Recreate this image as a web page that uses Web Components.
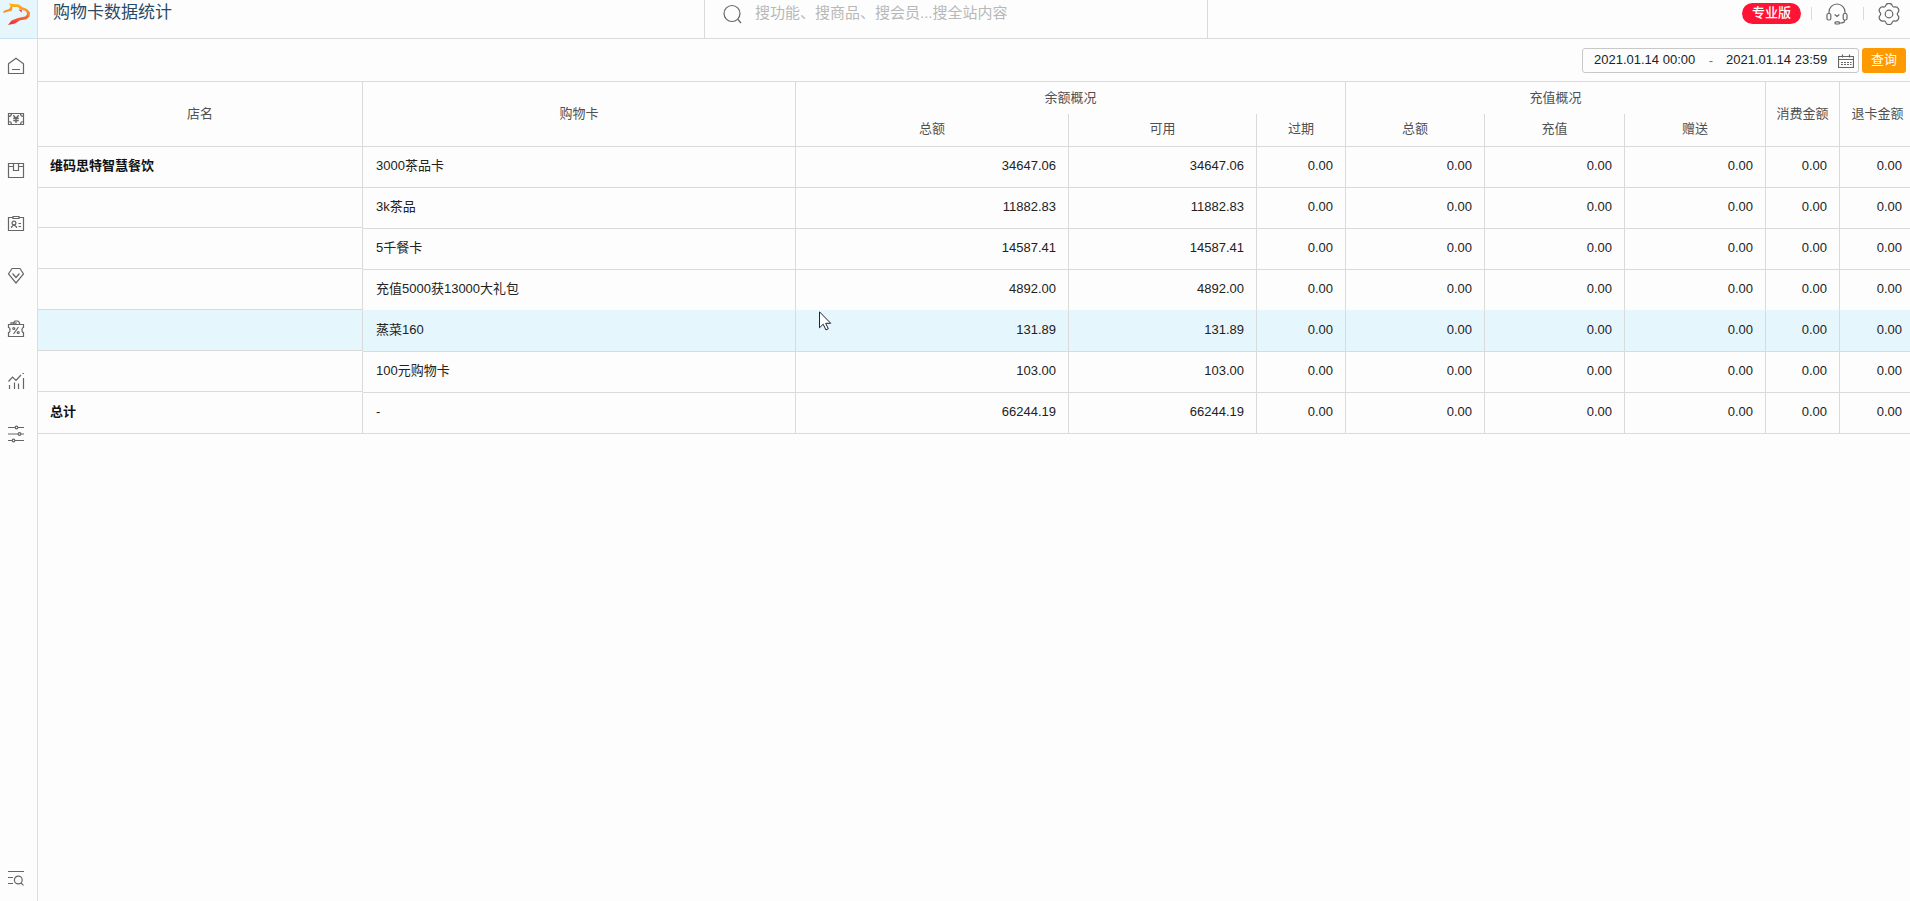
<!DOCTYPE html>
<html lang="zh-CN">
<head>
<meta charset="utf-8">
<title>购物卡数据统计</title>
<style>
html, body { height: 100%; margin: 0; }
body {
  --line: #dadada; --side-line: #c9e3f0; --tint: #e5f6fd; --ink: #222; --head: #505050;
  background: #fdfdfd; color: var(--ink);
  font: 13px/18px "Liberation Sans", "Noto Sans CJK SC", sans-serif;
}
</style>
</head>
<body>
<app-shell>
  <side-nav slot="nav"></side-nav>
  <top-bar slot="top" heading="购物卡数据统计"></top-bar>
  <filter-bar slot="filter"></filter-bar>
  <stats-table></stats-table>
</app-shell>
<script>
function define(name, html, setup) {
  const t = document.createElement('template');
  t.innerHTML = '<style>:host,*{box-sizing:border-box}</style>' + html;
  customElements.define(name, class extends HTMLElement {
    constructor() {
      super();
      this.attachShadow({ mode: 'open' }).append(t.content.cloneNode(true));
    }
    connectedCallback() { if (setup) setup(this, this.shadowRoot); }
  });
}

// Outline of a six-lobed gear with rounded lobes, centred on (11, 11).
function gearPath() {
  const pts = [];
  for (let k = 0; k < 6; k++) {
    for (const [deg, r] of [[-13, 11], [13, 11], [30, 7.6]]) {
      const a = (k * 60 - 90 + deg) * Math.PI / 180;
      pts.push([11 + r * Math.cos(a), 11 + r * Math.sin(a)]);
    }
  }
  const mid = (p, q) => `${((p[0] + q[0]) / 2).toFixed(2)} ${((p[1] + q[1]) / 2).toFixed(2)}`;
  return `M${mid(pts[pts.length - 1], pts[0])}` + pts.map((p, i) =>
    `Q${p[0].toFixed(2)} ${p[1].toFixed(2)} ${mid(p, pts[(i + 1) % pts.length])}`).join('') + 'Z';
}

const icons = {
  logo: [28, '<defs><linearGradient id="g" gradientUnits="userSpaceOnUse" x1="0" y1="2" x2="0" y2="22"><stop offset="0" stop-color="#fdb515"/><stop offset=".5" stop-color="#f9802b"/><stop offset="1" stop-color="#ec2f45"/></linearGradient></defs><path fill="url(#g)" stroke="none" d="M6 1.500 16 2.500 19 5 24 7 27 10.500 26.500 14.500 23.500 17.200 17 18.200 12 21.500 5 23 8.500 18.500 15 16 22 14.500 24 12.500 23.500 10 21.500 8.500 17 7.500 15 5 9.500 5 9 8.500 0 11 1 8.800 6 7 7.500 4.500Z"/><path fill="#ee3366" stroke="none" d="M15.500 7.500 19 8.200 18.500 10.500Z"/>'],
  home: [18, '<path d="M1.500 6.700 9 1.200l7.500 5.500v9.800h-15zM5 12.500h8"/>'],
  cash: [18, '<path d="M1.500 3.500h15v11h-15zM1.500 6.500q3 0 3-3M16.500 6.500q-3 0-3-3M1.500 11.500q3 0 3 3M16.500 11.500q-3 0-3 3"/><path stroke-width="1.400" d="m6.300 5.300 2.700 3 2.700-3M9 8v5M6.300 8.300h5.400M6.300 10.500h5.400"/>'],
  box: [18, '<path d="M1.500 1.500h15v14h-15zM1.500 4.500h5M11.500 4.500h5M6.500 1.500v7h5v-7"/>'],
  badge: [18, '<path d="M6 2.500H1.500v13h15v-13H12M6 1.500h6v2H6zM4.500 13v-1l1.500-1.500h2L9.500 12v1M11.500 8.500H14M11.500 11.500H14"/><circle cx="7" cy="8" r="1.900"/>'],
  gem: [18, '<path d="M5 1.500h8L16.500 7 9 16 1.500 7z"/><path d="m5.500 6.500 3.500 4 3.500-4"/>'],
  coupon: [18, '<path d="M1.500 4.500h15v3q-1.500 0-1.500 2.500t1.500 2.500v4h-15v-4Q3 12.500 3 10T1.500 7.500zM4 4.500V2.800h2.500v1.700M6.500 2.800 8 1h3l1.500 1.700v1.800M8 4.500V3h2M6.500 14l5-7"/><circle cx="6.800" cy="8.500" r="1"/><circle cx="11.200" cy="12.500" r="1"/>'],
  chart: [18, '<path d="m1.500 9.500 4-4.500 3.500 3.500 5-5.500M15.500 1.500h1.500M2.500 17v-4M7.500 17V10.500M11.500 17v-5.500M16.500 17V6"/>'],
  sliders: [18, '<path d="M1 2.500h16M1 9h16M1 15.500h16"/><circle cx="9.500" cy="2.500" r="1.300" fill="#fdfdfd"/><circle cx="12.500" cy="9" r="1.300" fill="#fdfdfd"/><circle cx="6.500" cy="15.500" r="1.300" fill="#fdfdfd"/>'],
  menusearch: [18, '<path d="M1 2.500h16M1 8.500h5M1 14.500h5M14 13.800l2.500 2.500"/><circle cx="11.300" cy="11" r="3.900"/>'],
  search: [20, '<circle cx="9" cy="9.500" r="8"/><path d="m15 15.500 3 3.500"/>'],
  headset: [22, '<path d="M3 10.500V9a8 8 0 0 1 16 0v1.500M18.500 17v1q0 2-4.500 2"/><rect x="1" y="10.500" width="3.800" height="6.500" rx="1.500"/><rect x="17.200" y="10.500" width="3.800" height="6.500" rx="1.500"/><path d="m8.700 11.500 2.300 2 2.300-2"/><rect x="9" y="18.800" width="4.500" height="2.200" rx="1"/>'],
  gear: [22, `<path d="${gearPath()}"/><circle cx="11" cy="11" r="3.800"/>`],
  calendar: [16, '<path d="M.5 3.500h15v11H.5zM.5 6.500h15M4.500 1.500v3M11.500 1.500v3"/><path stroke-dasharray="2 1" d="M3 9.500h10.500M3 11.500h10.500"/>']
};
define('ui-icon', '<style>:host{display:block;flex:none;color:#666}svg{display:block;fill:none;stroke:currentColor;stroke-width:1.2}</style><svg aria-hidden="true"></svg>', (el, root) => {
  const [size, body] = icons[el.getAttribute('name')];
  const svg = root.querySelector('svg');
  svg.setAttribute('width', size);
  svg.setAttribute('height', size);
  svg.setAttribute('viewBox', `0 0 ${size} ${size}`);
  svg.innerHTML = body;
});

define('app-shell', `<style>
:host{display:grid;grid-template-columns:38px minmax(0,1fr);min-height:100%}
main{min-width:0}
</style><slot name="nav"></slot><main><slot name="top"></slot><slot name="filter"></slot><slot></slot></main>`);

define('side-nav', `<style>
:host{display:block;border-right:1px solid var(--side-line)}
nav{display:flex;flex-direction:column;height:100%}
a{display:block;padding-left:7px}
.logo{height:39px;padding:2px 0 0 3px;background:var(--tint);border-bottom:1px solid var(--side-line)}
.items{display:flex;flex-direction:column;justify-content:space-between;height:386px;margin-top:18px}
.last{margin-top:auto;padding-bottom:14px}
</style><nav aria-label="主导航">
<a class="logo" href="#" aria-label="首页"><ui-icon name="logo"></ui-icon></a>
<div class="items"></div>
<a class="last" href="#" aria-label="菜单搜索"><ui-icon name="menusearch"></ui-icon></a></nav>`, (el, root) => {
  root.querySelector('.items').innerHTML = ['home', 'cash', 'box', 'badge', 'gem', 'coupon', 'chart', 'sliders']
    .map(n => `<a href="#" aria-label="${n}"><ui-icon name="${n}"></ui-icon></a>`).join('');
});

define('top-bar', `<style>
:host{display:grid;grid-template-columns:minmax(0,666fr) minmax(0,504fr) minmax(0,702fr);height:39px;border-bottom:1px solid var(--line)}
h1{margin:0;padding:1px 0 0 15px;font-size:17px;line-height:24px;font-weight:400;color:#2b4a63}
label{display:flex;align-items:flex-start;gap:12px;padding:4px 0 0 18px;border:solid var(--line);border-width:0 1px}
input{flex:1;min-width:0;height:20px;margin-top:-1px;padding:0;border:0;outline:0;background:none;font:15px/20px "Liberation Sans","Noto Sans CJK SC",sans-serif;color:#333}
input::placeholder{color:#b8b8b8;opacity:1}
.tools{display:flex;justify-content:flex-end;align-items:flex-start;padding:3px 10px 0 0}
.plan{height:21px;width:59px;text-align:center;line-height:20px;border-radius:11px;background:#ff1435;color:#fff;font-weight:500}
i{width:1px;height:13px;margin-top:4px;background:var(--line)}
button{padding:0;border:0;background:none}
.plan + i{margin-left:10px}
.help{margin:0 15px 0 14px}.set{margin-left:14px}
</style><h1></h1>
<label aria-label="搜索"><ui-icon name="search"></ui-icon><input type="search" placeholder="搜功能、搜商品、搜会员...搜全站内容"></label>
<div class="tools"><span class="plan">专业版</span><i></i><button class="help" aria-label="客服"><ui-icon name="headset"></ui-icon></button><i></i><button class="set" aria-label="设置"><ui-icon name="gear"></ui-icon></button></div>`,
(el, root) => { root.querySelector('h1').textContent = el.getAttribute('heading'); });

define('filter-bar', `<style>
:host{display:flex;justify-content:flex-end;align-items:flex-start;gap:3px;height:42px;padding:9px 4px 0 0}
.range{display:flex;align-items:center;width:277px;height:25px;padding:0 4px 0 11px;border:1px solid #c8c8c8;border-radius:3px}
input{width:102px;height:22px;padding:0 0 2px;border:0;outline:0;background:none;font:inherit;color:var(--ink)}
span{width:30px;text-align:center;color:#777}
ui-icon{margin-left:auto}
button{width:44px;height:25px;padding:0 0 1px;border:0;border-radius:3px;background:#ff9900;color:#fff;font:inherit}
</style><div class="range"><input aria-label="开始时间" value="2021.01.14 00:00"><span>-</span><input aria-label="结束时间" value="2021.01.14 23:59"><ui-icon name="calendar"></ui-icon></div><button>查询</button>`);

define('stats-table', `<style>
:host{display:block}
table{width:100%;table-layout:fixed;border-collapse:separate;border-spacing:0;border-top:1px solid var(--line)}
th,td{padding:0;border:solid var(--line);border-width:0 1px 1px 0;background-clip:padding-box;white-space:nowrap}
thead th{font-weight:400;color:var(--head);text-align:center}
thead .group{height:32px;border-bottom:0}
thead .sub{height:33px;padding-bottom:3px}
thead .end{border-right:0;padding-left:5px}
tbody th,tbody td{height:41px;padding-bottom:2px}
tbody th{padding-left:12px;text-align:left;color:#111}
tbody th.blank{border-bottom-color:transparent;box-shadow:inset 0 -1px var(--line)}
td{padding-right:12px;text-align:right}
td.name{padding-left:13px;text-align:left}
td:last-child{padding-right:8px;border-right:0}
.active th,.active td{background-color:var(--tint)}
.above td,.above th.blank{border-bottom-color:var(--tint)}
</style><table>
<colgroup></colgroup>
<thead><tr><th rowspan="2">店名</th><th rowspan="2">购物卡</th><th class="group" colspan="3">余额概况</th><th class="group" colspan="3">充值概况</th><th rowspan="2">消费金额</th><th rowspan="2" class="end">退卡金额</th></tr>
<tr><th class="sub">总额</th><th class="sub">可用</th><th class="sub">过期</th><th class="sub">总额</th><th class="sub">充值</th><th class="sub">赠送</th></tr></thead>
<tbody></tbody></table>`, (el, root) => {
  root.querySelector('colgroup').innerHTML = [325, 433, 273, 188, 89, 139, 140, 141, 74, 70].map(w => `<col style="width:${w}px">`).join('');
  const rows = [
    ['维码思特智慧餐饮', '3000茶品卡', '34647.06'], ['', '3k茶品', '11882.83'], ['', '5千餐卡', '14587.41'],
    ['', '充值5000获13000大礼包', '4892.00', 'above'], ['', '蒸菜160', '131.89', 'active'],
    ['', '100元购物卡', '103.00'], ['总计', '-', '66244.19']
  ];
  root.querySelector('tbody').innerHTML = rows.map(([shop, card, sum, cls = '']) =>
    `<tr class="${cls}"><th scope="row" class="${shop ? '' : 'blank'}">${shop}</th><td class="name">${card}</td>` +
    `<td>${sum}</td><td>${sum}</td>` + '<td>0.00</td>'.repeat(6) + '</tr>').join('');
});

define('mouse-pointer', `<style>
:host{display:block;position:absolute;left:819px;top:311px;pointer-events:none}svg{display:block}
</style><svg width="13" height="20" viewBox="0 0 13 20" aria-hidden="true"><path fill="#fff" stroke="#222238" d="M.5.800v16l3.700-3.600 2.700 5.700 2.400-1.100-2.600-5.500h5z"/></svg>`);
document.body.append(document.createElement('mouse-pointer'));
</script>
</body>
</html>
